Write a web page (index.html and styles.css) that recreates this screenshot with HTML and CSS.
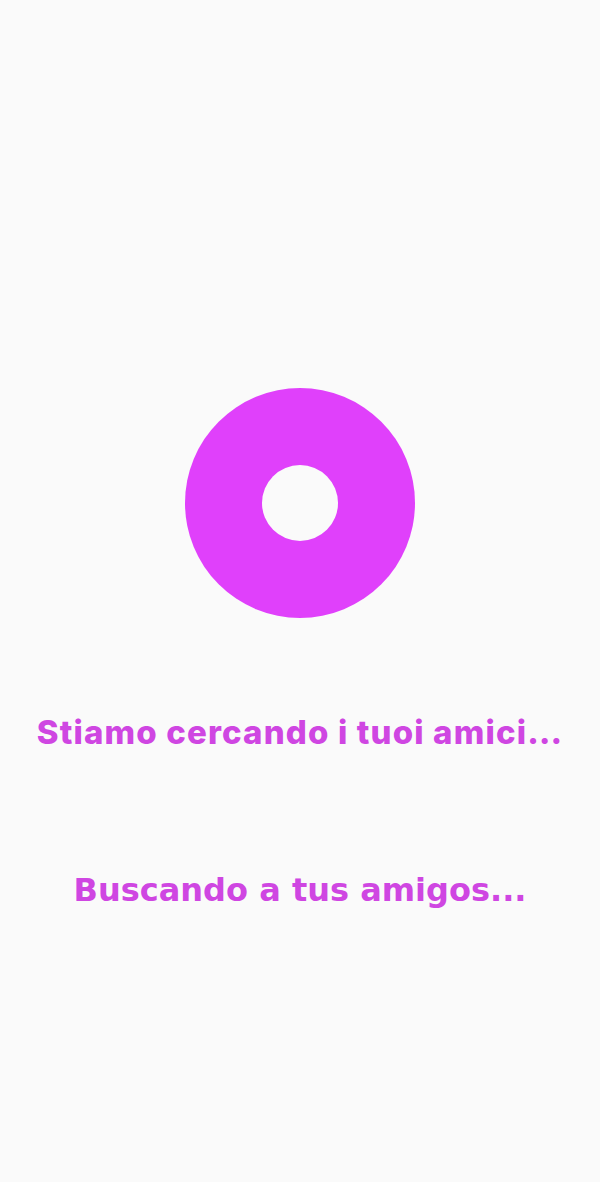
FILE: index.html
```html
<!DOCTYPE html>
<html lang="it">
<head>
<meta charset="utf-8">
<link rel="stylesheet" href="styles.css">
</head>
<body>
<main class="screen">
  <div class="spinner"><div class="hole"></div></div>
  <p class="msg msg-it">Stiamo cercando i tuoi amici…</p>
  <p class="msg msg-es">Buscando a tus amigos...</p>
</main>
</body>
</html>
```
FILE: styles.css
```css
html, body {
  margin: 0;
  padding: 0;
  background: #fafafa;
}
.screen {
  width: 600px;
  height: 1182px;
  display: flex;
  flex-direction: column;
  align-items: center;
  padding-top: 388px;
  box-sizing: border-box;
}
.spinner {
  width: 230px;
  height: 230px;
  border-radius: 50%;
  background: #e040fb;
  display: flex;
  align-items: center;
  justify-content: center;
}
.hole {
  width: 76px;
  height: 76px;
  border-radius: 50%;
  background: #fafafa;
}
.msg {
  margin: 0;
  color: #cf46e2;
  white-space: nowrap;
}
.msg-it {
  font-family: Inter, "DejaVu Sans", sans-serif;
  font-weight: 800;
  font-size: 33px;
  letter-spacing: 1.15px;
  line-height: 40px;
  margin-top: 94px;
}
.msg-es {
  font-family: "DejaVu Sans", sans-serif;
  font-weight: 700;
  font-size: 32px;
  line-height: 38px;
  margin-top: 119px;
}
```
